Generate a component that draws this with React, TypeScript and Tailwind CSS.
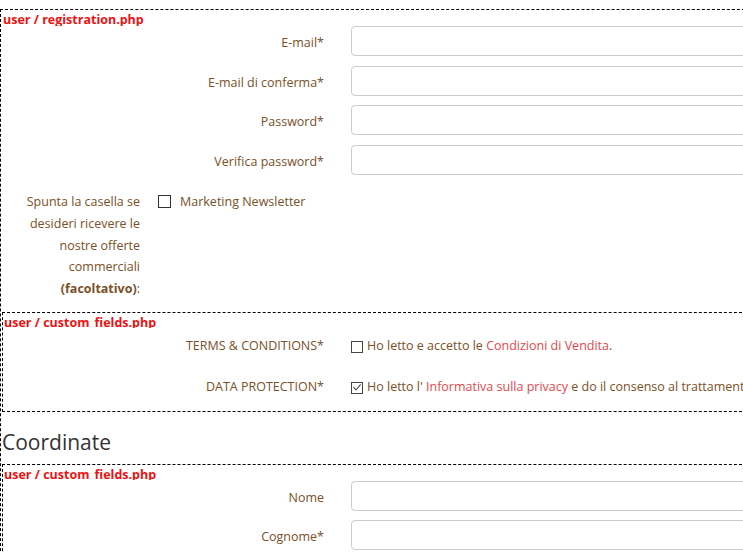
import React from 'react';

const labelColor = 'text-[#7a5028]';

function FileTag({ name }: { name: string }) {
  return (
    <div className="h-[15.5px] mb-[0.5px] overflow-hidden pl-[1px] text-[12.5px] leading-[20px] font-bold text-[#ee1111]">
      {name}
    </div>
  );
}

function InputRow({ label, labelWidth, first }: { label: string; labelWidth: string; first?: boolean }) {
  return (
    <div className={`flex items-center h-[30px] ${first ? '' : 'mt-[9.5px]'}`}>
      <div className={`${labelWidth} shrink-0 mt-[5px] text-right text-[12.5px] ${labelColor}`}>{label}</div>
      <input
        type="text"
        className="ml-[27px] w-[430px] h-[30px] shrink-0 rounded-[4px] border border-[#cccccc] bg-white"
      />
    </div>
  );
}

function Box({ children, className = '' }: { children: React.ReactNode; className?: string }) {
  return (
    <div className={`border-l border-t border-b border-dashed border-black w-[760px] ${className}`}>
      {children}
    </div>
  );
}

function CheckIcon() {
  return (
    <svg viewBox="0 0 12 12" className="w-[11px] h-[11px]">
      <path d="M1.6 5.6 L4.8 8.9 L10.4 2.2" fill="none" stroke="#555" strokeWidth="1.3" />
    </svg>
  );
}

export default function App() {
  return (
    <div
      className="w-[743px] h-[553px] overflow-hidden bg-white"
      style={{ fontFamily: '"Open Sans", "Liberation Sans", sans-serif' }}
    >
      <div className="mt-[9px] pl-[1px] border-l border-t border-dashed border-black w-[770px]">
        <FileTag name="user / registration.php" />
        <InputRow label="E-mail*" labelWidth="w-[322px]" first />
        <InputRow label="E-mail di conferma*" labelWidth="w-[322px]" />
        <InputRow label="Password*" labelWidth="w-[322px]" />
        <InputRow label="Verifica password*" labelWidth="w-[322px]" />

        <div className="flex items-start mt-[16.5px]">
          <div className={`ml-[20px] w-[118px] text-right text-[12.5px] leading-[21.75px] ${labelColor}`}>
            Spunta la casella se desideri ricevere le nostre offerte commerciali{' '}
            <span className="font-bold">(facoltativo)</span>:
          </div>
          <label className={`flex items-center ml-[18px] text-[12.5px] leading-[21.75px] ${labelColor}`}>
            <span className="w-[13px] h-[13px] border border-[#333] bg-white shrink-0" />
            <span className="ml-[9px]">Marketing Newsletter</span>
          </label>
        </div>

        <Box className="mt-[12px]">
          <FileTag name="user / custom_fields.php" />
          <div className="pt-[3px] pb-[8px]">
            <div className="flex items-center h-[30px]">
              <div className={`w-[321px] shrink-0 text-right text-[12.5px] ${labelColor}`}>TERMS &amp; CONDITIONS*</div>
              <div className={`ml-[27px] flex items-center whitespace-nowrap text-[12.5px] ${labelColor}`}>
                <span className="w-[12px] h-[12px] border border-[#444] bg-white shrink-0" />
                <span className="ml-[4px]">
                  Ho letto e accetto le <span className="text-[#e5484d]">Condizioni di Vendita</span>.
                </span>
              </div>
            </div>
            <div className="flex items-center h-[30px] mt-[11px]">
              <div className={`w-[321px] shrink-0 text-right text-[12.5px] ${labelColor}`}>DATA PROTECTION*</div>
              <div className={`ml-[27px] flex items-center whitespace-nowrap text-[12.5px] ${labelColor}`}>
                <span className="w-[12px] h-[12px] border border-[#444] bg-white shrink-0 flex items-center justify-center">
                  <CheckIcon />
                </span>
                <span className="ml-[4px]">
                  Ho letto l' <span className="text-[#e5484d]">Informativa sulla privacy</span> e do il consenso al
                  trattamento
                </span>
              </div>
            </div>
          </div>
        </Box>

        <h2 className="mt-[15px] mb-[7px] h-[30px] text-[21px] leading-[30px] text-[#333333]">Coordinate</h2>

        <Box className="pb-[20px]">
          <FileTag name="user / custom_fields.php" />
          <InputRow label="Nome" labelWidth="w-[321px]" first />
          <InputRow label="Cognome*" labelWidth="w-[321px]" />
        </Box>
      </div>
    </div>
  );
}
